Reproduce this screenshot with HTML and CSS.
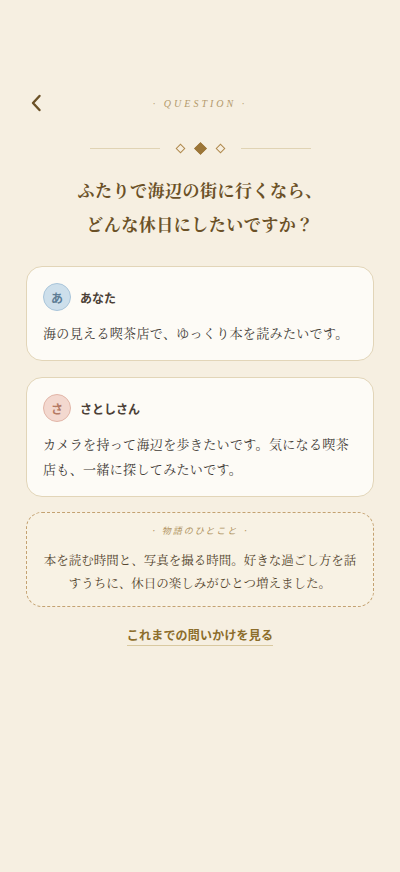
FILE: index.html
```html
<!DOCTYPE html>
<html lang="ja">
<head>
<meta charset="utf-8">
<title>Question</title>
<link rel="stylesheet" href="styles.css">
</head>
<body>
<main class="screen">
  <header class="header">
    <button class="back" aria-label="戻る">
      <svg width="12" height="18" viewBox="0 0 12 18"><path d="M9.5 2 L3 9 L9.5 16" fill="none" stroke="#6b5127" stroke-width="2.4" stroke-linecap="round" stroke-linejoin="round"/></svg>
    </button>
    <div class="eyebrow">· QUESTION ·</div>
    <div class="spacer"></div>
  </header>

  <div class="divider">
    <span class="line"></span>
    <span class="dia"></span>
    <span class="dia filled"></span>
    <span class="dia"></span>
    <span class="line"></span>
  </div>

  <h1 class="title">ふたりで海辺の街に行くなら、<br>どんな休日にしたいですか？</h1>

  <section class="card">
    <div class="who">
      <span class="avatar blue">あ</span>
      <span class="name">あなた</span>
    </div>
    <p class="msg">海の見える喫茶店で、ゆっくり本を読みたいです。</p>
  </section>

  <section class="card">
    <div class="who">
      <span class="avatar pink">さ</span>
      <span class="name">さとしさん</span>
    </div>
    <p class="msg">カメラを持って海辺を歩きたいです。気になる喫茶店も、一緒に探してみたいです。</p>
  </section>

  <section class="note">
    <div class="note-label">· 物語のひとこと ·</div>
    <p class="note-text">本を読む時間と、写真を撮る時間。好きな過ごし方を話すうちに、休日の楽しみがひとつ増えました。</p>
  </section>

  <div class="more"><a class="more-link" href="#">これまでの問いかけを見る</a></div>
</main>
</body>
</html>
```

FILE: styles.css
```css
html, body {
  margin: 0;
  padding: 0;
  background: #f6efe1;
}
body {
  font-family: "Noto Sans CJK JP", "Noto Sans", sans-serif;
  color: #4b4036;
}
.screen {
  width: 400px;
  min-height: 872px;
  box-sizing: border-box;
  padding: 91px 26px 40px;
}
.header {
  display: grid;
  grid-template-columns: 40px 1fr 40px;
  align-items: center;
  height: 24px;
}
.back {
  border: 0;
  background: none;
  padding: 0 0 0 4px;
  margin: 0;
  display: flex;
  align-items: center;
  cursor: pointer;
}
.eyebrow {
  text-align: center;
  font-family: "Liberation Serif", serif;
  font-style: italic;
  font-size: 10px;
  letter-spacing: 3px;
  color: #b49a6c;
}
.divider {
  margin-top: 25px;
  display: flex;
  justify-content: center;
  align-items: center;
  height: 16px;
}
.line {
  width: 70px;
  height: 1px;
  background: #e0d3b4;
}
.dia {
  width: 7px;
  height: 7px;
  border: 1px solid #b08a4e;
  transform: rotate(45deg);
  margin: 0 6px;
  box-sizing: border-box;
}
.divider .line:first-child { margin-right: 11px; }
.divider .line:last-child { margin-left: 11px; }
.dia.filled {
  background: #9c7638;
  border-color: #9c7638;
  width: 9px;
  height: 9px;
}
.title {
  margin: 17px 0 0;
  text-align: center;
  font-family: "Noto Serif CJK JP", "Noto Sans CJK JP", serif;
  font-weight: 700;
  font-size: 17px;
  letter-spacing: 0.5px;
  line-height: 34px;
  color: #6b5127;
}
.card {
  margin-top: 16px;
  background: #fdfbf6;
  border: 1px solid #e2d5b8;
  border-radius: 16px;
  padding: 16px 16px 15px;
}
.title + .card { margin-top: 25px; }
.who {
  display: flex;
  align-items: center;
  gap: 9px;
}
.avatar {
  width: 28px;
  height: 28px;
  border-radius: 50%;
  box-sizing: border-box;
  display: flex;
  align-items: center;
  justify-content: center;
  font-size: 12px;
  font-weight: 700;
}
.avatar.blue {
  background: #cddfeb;
  border: 1.5px solid #a9c5da;
  color: #5d7d95;
}
.avatar.pink {
  background: #f3d8cf;
  border: 1.5px solid #e2b6a8;
  color: #b47a64;
}
.name {
  font-size: 12px;
  font-weight: 700;
  color: #4b4036;
}
.msg {
  margin: 9px 0 0;
  font-family: "Noto Serif CJK JP", "Noto Sans CJK JP", serif;
  font-size: 13px;
  letter-spacing: 0.35px;
  line-height: 25px;
  color: #3f3a35;
}
.note {
  margin-top: 15px;
  border: 1.5px dashed #c4a271;
  border-radius: 16px;
  background: #f8f2e4;
  padding: 10px 14px 11px;
  text-align: center;
}
.note-label {
  font-size: 9px;
  font-style: italic;
  letter-spacing: 2px;
  color: #b0925e;
  line-height: 16px;
}
.note-text {
  margin: 10px 0 0;
  font-family: "Noto Serif CJK JP", "Noto Sans CJK JP", serif;
  font-size: 12.5px;
  line-height: 23px;
  color: #54452d;
}
.more {
  margin-top: 14px;
  text-align: center;
}
.more-link {
  display: inline-block;
  font-size: 12px;
  font-weight: 700;
  color: #8c6d2b;
  text-decoration: none;
  padding-bottom: 2px;
  border-bottom: 1px solid #d9c9a0;
  letter-spacing: 0.2px;
}
```
